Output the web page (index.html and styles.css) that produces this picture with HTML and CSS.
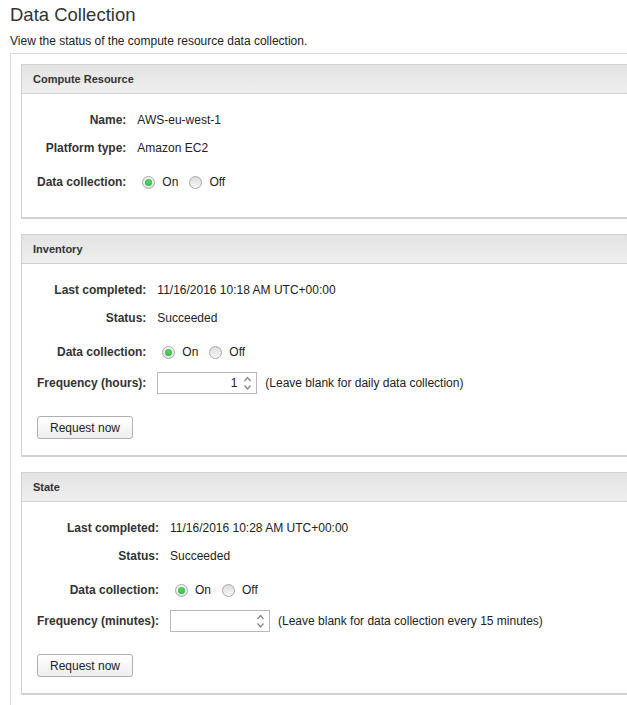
FILE: index.html
```html
<!DOCTYPE html>
<html>
<head>
<meta charset="utf-8">
<link rel="stylesheet" href="styles.css">
</head>
<body>
<h1 class="title">Data Collection</h1>
<p class="subtitle">View the status of the compute resource data collection.</p>
<div class="outer">
  <section class="panel">
    <div class="panel-head">Compute Resource</div>
    <div class="panel-body first">
      <div class="fields">
        <div class="lbl">Name:</div><div class="val">AWS-eu-west-1</div>
        <div class="lbl">Platform type:</div><div class="val">Amazon EC2</div>
        <div class="lbl">Data collection:</div>
        <div class="val radios"><span class="radio on"></span><span class="rtext">On</span><span class="radio"></span><span class="rtext">Off</span></div>
      </div>
    </div>
  </section>

  <section class="panel">
    <div class="panel-head">Inventory</div>
    <div class="panel-body">
      <div class="fields freq">
        <div class="lbl">Last completed:</div><div class="val">11/16/2016 10:18 AM UTC+00:00</div>
        <div class="lbl">Status:</div><div class="val">Succeeded</div>
        <div class="lbl">Data collection:</div>
        <div class="val radios"><span class="radio on"></span><span class="rtext">On</span><span class="radio"></span><span class="rtext">Off</span></div>
        <div class="lbl">Frequency (hours):</div>
        <div class="val">
          <div class="num"><span class="num-val">1</span><svg class="spin" width="9" height="20" viewBox="0 0 9 20"><path d="M1.5 8 L4.5 4.5 L7.5 8" /><path d="M1.5 12.5 L4.5 16 L7.5 12.5" /></svg></div>
          <span class="hint">(Leave blank for daily data collection)</span>
        </div>
      </div>
      <button class="btn" type="button">Request now</button>
    </div>
  </section>

  <section class="panel">
    <div class="panel-head">State</div>
    <div class="panel-body">
      <div class="fields freq">
        <div class="lbl">Last completed:</div><div class="val">11/16/2016 10:28 AM UTC+00:00</div>
        <div class="lbl">Status:</div><div class="val">Succeeded</div>
        <div class="lbl">Data collection:</div>
        <div class="val radios"><span class="radio on"></span><span class="rtext">On</span><span class="radio"></span><span class="rtext">Off</span></div>
        <div class="lbl">Frequency (minutes):</div>
        <div class="val">
          <div class="num"><span class="num-val"></span><svg class="spin" width="9" height="20" viewBox="0 0 9 20"><path d="M1.5 8 L4.5 4.5 L7.5 8" /><path d="M1.5 12.5 L4.5 16 L7.5 12.5" /></svg></div>
          <span class="hint">(Leave blank for data collection every 15 minutes)</span>
        </div>
      </div>
      <button class="btn" type="button">Request now</button>
    </div>
  </section>
</div>
</body>
</html>
```

FILE: styles.css
```css
html, body {
  margin: 0;
  padding: 0;
  background: #fff;
}
body {
  padding-left: 10px;
  font-family: "Liberation Sans", Arial, Helvetica, sans-serif;
  font-size: 12px;
  color: #222;
}
.title {
  margin: 0;
  padding-top: 4px;
  font-size: 18.5px;
  line-height: 22px;
  font-weight: normal;
  color: #333;
}
.subtitle {
  margin: 7px 0 4px;
  line-height: 16px;
  font-size: 12px;
  color: #222;
}
.outer {
  border-top: 1px solid #dcdcdc;
  border-left: 1px solid #dcdcdc;
  padding: 10px 0 20px 10px;
}
.panel {
  border: 1px solid #d2d2d2;
  border-right: none;
  border-bottom: 2px solid #d2d2d2;
  margin-bottom: 15px;
  background: #fff;
}
.panel-head {
  height: 28px;
  line-height: 28px;
  padding-left: 11px;
  font-size: 11px;
  font-weight: bold;
  color: #333;
  background: linear-gradient(#e3e3e3, #efefef);
  border-bottom: 1px solid #cfcfcf;
}
.panel-body {
  padding: 12px 15px 16px;
}
.panel-body.first {
  padding-bottom: 15px;
}
.fields {
  display: grid;
  grid-template-columns: max-content 1fr;
  grid-template-rows: 28px 28px 40px;
  column-gap: 11px;
  align-items: center;
}
.fields.freq {
  grid-template-rows: 28px 28px 40px 22px;
}
.lbl {
  text-align: right;
  font-weight: bold;
  color: #333;
}
.val {
  display: flex;
  align-items: center;
  color: #222;
}
.radios {
  padding-left: 5px;
}
.radio {
  width: 13px;
  height: 13px;
  box-sizing: border-box;
  border-radius: 50%;
  border: 1px solid #a9a9a9;
  background: linear-gradient(#dcdcdc, #f7f7f7);
  display: flex;
  align-items: center;
  justify-content: center;
  margin-right: 7px;
}
.radio.on::after {
  content: "";
  width: 7px;
  height: 7px;
  border-radius: 50%;
  background: radial-gradient(circle at 50% 40%, #4cd964, #2bb140);
}
.radio.on {
  background: linear-gradient(#f4f4f4, #e4e4e4);
}
.rtext {
  margin-right: 11px;
}
.num {
  width: 100px;
  height: 22px;
  box-sizing: border-box;
  border: 1px solid #b8b8b8;
  display: flex;
  align-items: center;
  justify-content: flex-end;
  padding-right: 4px;
  background: #fff;
}
.num-val {
  margin-right: 6px;
}
.spin {
  fill: none;
  stroke: #8a8a8a;
  stroke-width: 1.4;
}
.hint {
  margin-left: 8px;
}
.btn {
  display: block;
  margin-top: 22px;
  width: 96px;
  height: 23px;
  padding: 0;
  border: 1px solid #b0b0b0;
  border-radius: 3px;
  background: linear-gradient(#ffffff, #eeeeee);
  font-family: "Liberation Sans", Arial, Helvetica, sans-serif;
  font-size: 12px;
  color: #222;
}
```
